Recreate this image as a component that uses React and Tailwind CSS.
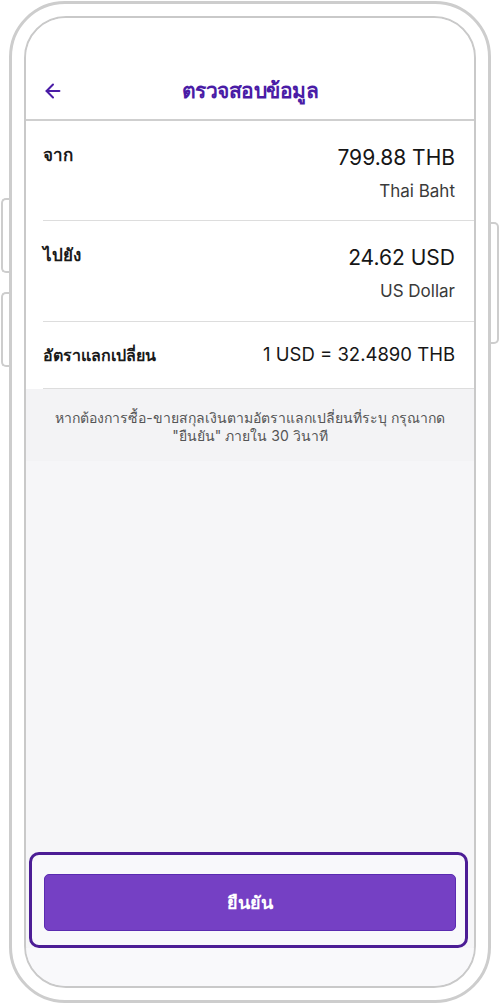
import React from "react";
import { ArrowLeft } from "lucide-react";

const rows = [
  { label: "จาก", amount: "799.88 THB", sub: "Thai Baht" },
  { label: "ไปยัง", amount: "24.62 USD", sub: "US Dollar" },
];

function SideKey({ className }) {
  return <div className={`absolute w-[10px] border-2 border-[#cdcdcd] bg-white ${className}`} />;
}

export default function App() {
  return (
    <div className="relative w-[500px] h-[1004px] bg-white pt-[1px] pl-[9px] font-['Inter','Noto_Sans',sans-serif]">
      {/* ปุ่มข้างเครื่อง */}
      <SideKey className="left-[1px] top-[198px] h-[75px] rounded-l-[5px] border-r-0" />
      <SideKey className="left-[1px] top-[292px] h-[75px] rounded-l-[5px] border-r-0" />
      <SideKey className="right-[1px] top-[222px] h-[122px] rounded-r-[5px] border-l-0" />

      <div className="relative w-[482px] h-[1002px] rounded-[56px] border-[3px] border-[#cdcdcd] bg-white p-[12px]">
        <div className="flex flex-col h-full rounded-[42px] border-2 border-[#c9c9c9] overflow-hidden bg-[#f6f6f8]">
          {/* หัวข้อ */}
          <div className="bg-white pt-[44px] border-b-2 border-[#cfcfcf]">
            <div className="relative flex items-center justify-center h-[57px]">
              <ArrowLeft className="absolute left-[16px] w-[22px] h-[22px] text-[#4a1ca6]" strokeWidth={2.2} />
              <span className="text-[21px] font-bold text-[#4a1ca6] tracking-tight">ตรวจสอบข้อมูล</span>
            </div>
          </div>

          {/* รายละเอียด */}
          <div className="bg-white pl-[17px]">
            {rows.map((r, i) => (
              <div
                key={r.label}
                className={`flex justify-between pr-[19px] pt-[21px] border-b border-[#dddddd] ${i === 0 ? "h-[100px]" : "h-[101px]"}`}
              >
                <span className="text-[17px] font-semibold text-[#1a1a1a] leading-[26px]">{r.label}</span>
                <div className="flex flex-col items-end pt-[2px]">
                  <span className="text-[21px] text-[#161616] leading-[28px]">{r.amount}</span>
                  <span className="text-[17px] text-[#3a3a3a] leading-[20px] mt-[9px]">{r.sub}</span>
                </div>
              </div>
            ))}
            <div className="flex justify-between items-center pr-[19px] h-[67px] border-b border-[#dddddd]">
              <span className="text-[16px] font-semibold text-[#1a1a1a]">อัตราแลกเปลี่ยน</span>
              <span className="text-[18.5px] text-[#161616]">1 USD = 32.4890 THB</span>
            </div>
          </div>

          {/* หมายเหตุ */}
          <div className="bg-[#f3f3f5] px-[16px] pt-[20px] pb-[16px] text-center text-[14px] leading-[18px] text-[#555555]">
            หากต้องการซื้อ-ขายสกุลเงินตามอัตราแลกเปลี่ยนที่ระบุ กรุณากด
            <br />
            "ยืนยัน" ภายใน 30 วินาที
          </div>

          <div className="flex-1" />

          {/* ปุ่มยืนยัน */}
          <div className="ml-[3px] mr-[6px] rounded-[10px] border-[3px] border-[#4c1d95] bg-[#f8f8fb] pl-[12px] pr-[9px] pt-[19px] pb-[14px]">
            <button className="w-full h-[57px] rounded-[5px] border border-[#5a2bb0] bg-[#7540c4] text-white text-[18px] font-bold">
              ยืนยัน
            </button>
          </div>

          <div className="h-[38px] bg-[#f9f9fb]" />
        </div>
      </div>
    </div>
  );
}
